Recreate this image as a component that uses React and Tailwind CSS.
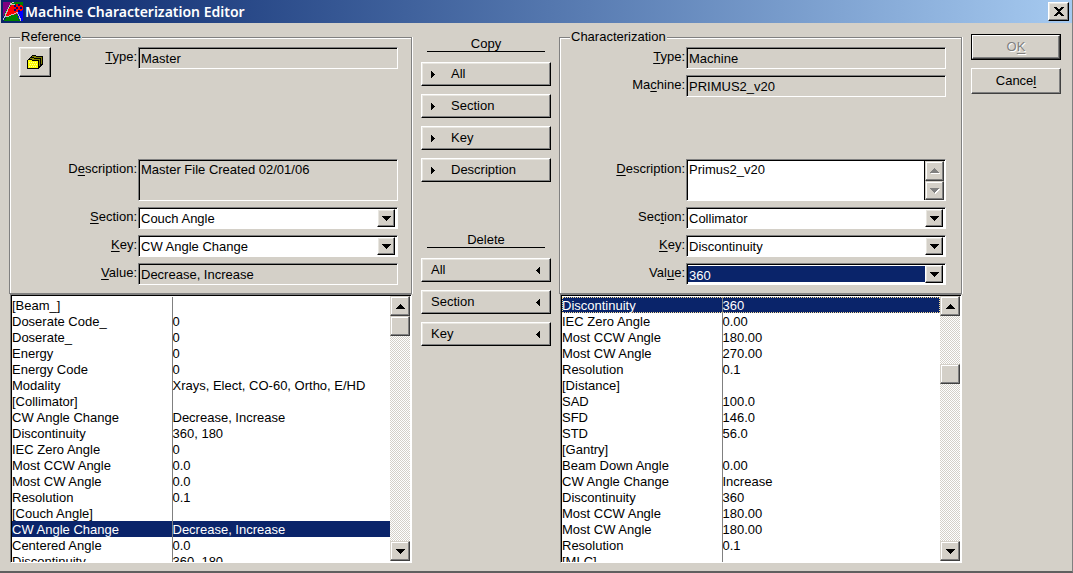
import { useState } from "react";

const referenceRows = [
  ["[Beam_]", ""],
  ["Doserate Code_", "0"],
  ["Doserate_", "0"],
  ["Energy", "0"],
  ["Energy Code", "0"],
  ["Modality", "Xrays, Elect, CO-60, Ortho, E/HD"],
  ["[Collimator]", ""],
  ["CW Angle Change", "Decrease, Increase"],
  ["Discontinuity", "360, 180"],
  ["IEC Zero Angle", "0"],
  ["Most CCW Angle", "0.0"],
  ["Most CW Angle", "0.0"],
  ["Resolution", "0.1"],
  ["[Couch Angle]", ""],
  ["CW Angle Change", "Decrease, Increase"],
  ["Centered Angle", "0.0"],
  ["Discontinuity", "360, 180"],
];

const machineRows = [
  ["Discontinuity", "360"],
  ["IEC Zero Angle", "0.00"],
  ["Most CCW Angle", "180.00"],
  ["Most CW Angle", "270.00"],
  ["Resolution", "0.1"],
  ["[Distance]", ""],
  ["SAD", "100.0"],
  ["SFD", "146.0"],
  ["STD", "56.0"],
  ["[Gantry]", ""],
  ["Beam Down Angle", "0.00"],
  ["CW Angle Change", "Increase"],
  ["Discontinuity", "360"],
  ["Most CCW Angle", "180.00"],
  ["Most CW Angle", "180.00"],
  ["Resolution", "0.1"],
  ["[MLC]", ""],
];

const raised =
  "bg-[#d4d0c8] border border-t-white border-l-white border-r-black border-b-black shadow-[inset_-1px_-1px_0_#808080,inset_1px_1px_0_#e8e6e0]";
const raisedSoft =
  "bg-[#d4d0c8] border border-t-[#d4d0c8] border-l-[#d4d0c8] border-r-[#404040] border-b-[#404040] shadow-[inset_-1px_-1px_0_#808080,inset_1px_1px_0_#fff]";
const sunken =
  "border border-t-[#808080] border-l-[#808080] border-r-white border-b-white shadow-[inset_1px_1px_0_#000]";

const AppIcon = () => (
  <svg width="20" height="19" viewBox="0 0 20 19" shapeRendering="crispEdges" aria-hidden="true">
    <rect width="20" height="19" fill="#008000" />
    <path d="M0 0h8L0 15z" fill="#800080" />
    <path d="M0 14L3 11v5l-3 3z" fill="#0a246a" />
    <path d="M13 10l7-6v15h-3z" fill="#00f" />
    <path d="M8 3h3l3 9-4 1-7 1 1-4z" fill="#f00" />
    <path d="M8 1L0 18M7 2h4l7 17M2 15l4-1 7-3 7-6M7 2l4-2" fill="none" stroke="#c0c0c0" strokeWidth="1" />
    <ellipse cx="15" cy="6" rx="5" ry="4" fill="#f00" />
    <path d="M11 3h2v2h-2zM15 2h2v2h-2zM13 5h2v2h-2zM17 5h2v2h-2zM11 7h2v2h-2zM15 8h2v2h-2z" fill="#000080" />
  </svg>
);

const FolderIcon = () => (
  <svg width="16" height="14" viewBox="0 0 16 14" shapeRendering="crispEdges" aria-hidden="true">
    <path d="M4 1h1V0h4v1h7v9h-1v1H4z" fill="#000" />
    <path d="M5 1h4v1h6v1H5z" fill="#808000" />
    <path d="M2 3h1V2h4v1h7v9h-1v1H2z" fill="#000" />
    <path d="M3 3h4v1h6v7h-1V5H3zM14 3h1v6h-1z" fill="#808000" />
    <path d="M0 5h1V4h4v1h7v9H0z" fill="#000" />
    <path d="M1 5h4v1h6v7H1z" fill="#ff0" />
    <path d="M2 7h1v1H2zM4 7h1v1H4zM6 7h1v1H6zM8 7h1v1H8zM3 9h1v1H3zM5 9h1v1H5zM7 9h1v1H7zM9 9h1v1H9zM2 11h1v1H2zM4 11h1v1H4zM6 11h1v1H6zM8 11h1v1H8z" fill="#ffffa0" />
  </svg>
);

const arrowPaths = {
  down: "M0 0h9v1H8v1H7v1H6v1H5v1H4V4H3V3H2V2H1V1H0z",
  up: "M4 0h1v1h1v1h1v1h1v1h1v1H0V4h1V3h1V2h1V1h1z",
  right: "M0 0h1v1h1v1h1v1h1v1H3v1H2v1H1v1H0z",
  left: "M4 0H3v1H2v1H1v1H0v1h1v1h1v1h1v1h1z",
};

const Arrow = ({ dir, disabled }) => {
  const vertical = dir === "up" || dir === "down";
  return (
    <svg
      className="shrink-0 overflow-visible"
      width={vertical ? 9 : 4}
      height={vertical ? 5 : 7}
      shapeRendering="crispEdges"
      aria-hidden="true"
    >
      {disabled && <path d={arrowPaths[dir]} fill="#fff" transform="translate(1 1)" />}
      <path d={arrowPaths[dir]} fill={disabled ? "#808080" : "#000"} />
    </svg>
  );
};

// Draws the "&Type" style mnemonic underline
const Mnemonic = ({ text }) => {
  const i = text.indexOf("&");
  if (i < 0) return text;
  return (
    <>
      {text.slice(0, i)}
      <span className="underline underline-offset-2">{text[i + 1]}</span>
      {text.slice(i + 2)}
    </>
  );
};

const Row = ({ id, label, labelWidth, tall, lead, children }) => (
  <div className={`flex items-start ${tall ? "h-12" : "h-7"}`}>
    <div className={`flex shrink-0 items-start justify-end ${labelWidth}`}>
      {lead}
      <label htmlFor={id} className="pr-px leading-5">
        <Mnemonic text={label} />
      </label>
    </div>
    {children}
  </div>
);

const ReadOnly = ({ id, value }) => (
  <input id={id} readOnly value={value} className={`h-[22px] min-w-0 flex-1 bg-[#d4d0c8] px-[2px] outline-none ${sunken}`} />
);

const Combo = ({ id, options, selected }) => (
  <div className={`relative flex h-[22px] min-w-0 flex-1 bg-white p-px ${sunken}`}>
    <select
      id={id}
      defaultValue={options[0]}
      className={`min-w-0 flex-1 appearance-none px-px outline-none ${
        selected ? "my-px mr-[19px] bg-[#0a246a] text-white" : "bg-transparent"
      }`}
    >
      {options.map((o) => (
        <option key={o}>{o}</option>
      ))}
    </select>
    <span className={`pointer-events-none absolute top-px right-0.5 bottom-px flex w-[18px] items-center justify-center ${raised}`}>
      <Arrow dir="down" />
    </span>
  </div>
);

const GroupBox = ({ title, className, children }) => (
  <fieldset className={`min-w-0 border border-[#808080] shadow-[inset_1px_1px_0_#fff,1px_0_0_#fff] ${className}`}>
    <legend className="ml-[10px] bg-[#d4d0c8] px-px leading-[14px]">{title}</legend>
    {children}
  </fieldset>
);

const ValueList = ({ label, rows, selected, onSelect, focused, thumb }) => (
  <div className={`ml-px flex min-h-0 flex-1 bg-white pt-px pl-px ${sunken}`}>
    <div className="min-w-0 flex-1 overflow-hidden pt-px">
      <table aria-label={label} className="w-full table-fixed border-collapse">
        <tbody>
          {rows.map(([key, value], i) => (
            <tr
              key={i}
              onClick={() => onSelect(i)}
              className={`h-4 ${i === selected ? "bg-[#0a246a] text-white" : ""} ${
                i === selected && focused ? "outline-1 -outline-offset-1 outline-dotted outline-[#f5db95]" : ""
              }`}
            >
              <td className="w-40 border-r border-[#808080] p-0 pt-px leading-[15px] whitespace-nowrap">{key}</td>
              <td className="p-0 pt-px leading-[15px] whitespace-nowrap">{value}</td>
            </tr>
          ))}
        </tbody>
      </table>
    </div>
    <div className="mr-px mb-px flex w-5 shrink-0 flex-col bg-[repeating-conic-gradient(#fff_0_25%,#d4d0c8_0_50%)] bg-[size:2px_2px]">
      <button aria-label="Scroll up" className={`flex h-5 items-center justify-center ${raisedSoft}`}>
        <Arrow dir="up" />
      </button>
      <div className="flex-1">
        <div className={`h-5 ${thumb} ${raisedSoft}`} />
      </div>
      <button aria-label="Scroll down" className={`flex h-5 items-center justify-center ${raisedSoft}`}>
        <Arrow dir="down" />
      </button>
    </div>
  </div>
);

const ActionHeading = ({ children }) => (
  <h2 className="mx-auto w-[118px] border-b border-black text-center leading-[14px]">{children}</h2>
);

const CopyButton = ({ children }) => (
  <button className={`flex h-6 items-center gap-4 pl-[9px] ${raised}`}>
    <Arrow dir="right" />
    {children}
  </button>
);

const DeleteButton = ({ children }) => (
  <button className={`flex h-6 items-center justify-between pr-[10px] pl-[9px] ${raised}`}>
    {children}
    <Arrow dir="left" />
  </button>
);

const App = () => {
  const [refRow, setRefRow] = useState(14);
  const [machineRow, setMachineRow] = useState(0);

  return (
    <div className="flex h-screen flex-col border-r border-b-2 border-[#808080] border-b-[#606060] bg-[#d4d0c8] font-['Liberation_Sans',Arial,sans-serif] text-[13px] text-black">
      <header className="ml-px flex h-[23px] shrink-0 items-center bg-linear-to-r from-[#0a246a] to-[#a6caf0] pr-[3px] pl-[2px]">
        <AppIcon />
        <h1 className="ml-[2px] flex-1 font-['Noto_Sans','Open_Sans',sans-serif] text-[14px] leading-5 font-semibold text-white">
          Machine Characterization Editor
        </h1>
        <button aria-label="Close" className={`flex h-[19px] w-[21px] items-center justify-center ${raised}`}>
          <svg width="10" height="9" shapeRendering="crispEdges" aria-hidden="true">
            <path d="M0 0h3v1h1v1h2V1h1V0h3v1H9v1H8v1H7v1H6v1h1v1h1v1h1v1h1v1H7V8H6V7H4v1H3v1H0V8h1V7h1V6h1V5h1V4H3V3H2V2H1V1H0z" />
          </svg>
        </button>
      </header>

      <main className="flex min-h-0 flex-1 pr-[11px] pb-2 pl-[9px]">
        <section className="flex min-w-0 flex-1 flex-col pt-[7px]">
          <GroupBox title="Reference" className="pr-[13px] pb-[2px]">
            <div className="pt-[3px]">
              <Row
                id="ref-type"
                label="&Type:"
                labelWidth="w-32"
                lead={
                  <button aria-label="Open reference" className={`mr-auto ml-[9px] flex h-[30px] w-8 items-center justify-center ${raised}`}>
                    <FolderIcon />
                  </button>
                }
              >
                <ReadOnly id="ref-type" value="Master" />
              </Row>
              <div className="h-21" />
              <Row id="ref-desc" label="D&escription:" labelWidth="w-32" tall>
                <textarea
                  id="ref-desc"
                  readOnly
                  value="Master File Created 02/01/06"
                  className={`h-[42px] min-w-0 flex-1 resize-none overflow-hidden bg-[#d4d0c8] px-[2px] pt-[2px] leading-4 outline-none ${sunken}`}
                />
              </Row>
              <Row id="ref-section" label="&Section:" labelWidth="w-32">
                <Combo id="ref-section" options={["Couch Angle", "Beam_", "Collimator"]} />
              </Row>
              <Row id="ref-key" label="&Key:" labelWidth="w-32">
                <Combo id="ref-key" options={["CW Angle Change", "Centered Angle", "Discontinuity"]} />
              </Row>
              <Row id="ref-value" label="&Value:" labelWidth="w-32">
                <ReadOnly id="ref-value" value="Decrease, Increase" />
              </Row>
            </div>
          </GroupBox>
          <ValueList label="Reference values" rows={referenceRows} selected={refRow} onSelect={setRefRow} thumb="mt-0" />
        </section>

        <section className="mr-2 ml-[9px] flex w-[130px] shrink-0 flex-col pt-[14px]">
          <ActionHeading>Copy</ActionHeading>
          <div className="mt-[10px] flex flex-col gap-2">
            <CopyButton>All</CopyButton>
            <CopyButton>Section</CopyButton>
            <CopyButton>Key</CopyButton>
            <CopyButton>Description</CopyButton>
          </div>
          <div className="mt-[51px]">
            <ActionHeading>Delete</ActionHeading>
          </div>
          <div className="mt-[10px] flex flex-col gap-2">
            <DeleteButton>All</DeleteButton>
            <DeleteButton>Section</DeleteButton>
            <DeleteButton>Key</DeleteButton>
          </div>
        </section>

        <section className="flex min-w-0 flex-1 flex-col pt-[7px]">
          <GroupBox title="Characterization" className="pr-[15px] pb-[2px]">
            <div className="pt-[3px]">
              <Row id="mach-type" label="&Type:" labelWidth="w-[126px]">
                <ReadOnly id="mach-type" value="Machine" />
              </Row>
              <Row id="mach-name" label="Ma&chine:" labelWidth="w-[126px]">
                <ReadOnly id="mach-name" value="PRIMUS2_v20" />
              </Row>
              <div className="h-14" />
              <Row id="mach-desc" label="&Description:" labelWidth="w-[126px]" tall>
                <div className={`flex h-[42px] min-w-0 flex-1 bg-white pt-px pl-px ${sunken}`}>
                  <textarea
                    id="mach-desc"
                    defaultValue="Primus2_v20"
                    className="min-w-0 flex-1 resize-none overflow-hidden px-px pt-px leading-4 outline-none"
                  />
                  <div className="mr-px flex w-5 flex-col border-l border-black">
                    <button disabled aria-label="Scroll description up" className={`flex flex-1 items-center justify-center ${raisedSoft}`}>
                      <Arrow dir="up" disabled />
                    </button>
                    <button disabled aria-label="Scroll description down" className={`flex flex-1 items-center justify-center ${raisedSoft}`}>
                      <Arrow dir="down" disabled />
                    </button>
                  </div>
                </div>
              </Row>
              <Row id="mach-section" label="Sec&tion:" labelWidth="w-[126px]">
                <Combo id="mach-section" options={["Collimator", "Distance", "Gantry", "MLC"]} />
              </Row>
              <Row id="mach-key" label="&Key:" labelWidth="w-[126px]">
                <Combo id="mach-key" options={["Discontinuity", "IEC Zero Angle", "Resolution"]} />
              </Row>
              <Row id="mach-value" label="Val&ue:" labelWidth="w-[126px]">
                <Combo id="mach-value" options={["360", "180"]} selected />
              </Row>
            </div>
          </GroupBox>
          <ValueList
            label="Characterization values"
            rows={machineRows}
            selected={machineRow}
            onSelect={setMachineRow}
            focused
            thumb="mt-12"
          />
        </section>

        <section className="ml-[9px] flex w-[90px] shrink-0 flex-col gap-2 pt-[11px]">
          <div className="flex flex-col border border-black">
            <button
              disabled
              className="h-6 border border-t-white border-l-white border-r-[#404040] border-b-[#404040] text-[#808080] shadow-[inset_-1px_-1px_0_#808080] [text-shadow:1px_1px_0_#fff]"
            >
              <Mnemonic text="O&K" />
            </button>
          </div>
          <button className="h-[26px] border border-t-white border-l-white border-r-[#404040] border-b-[#404040] shadow-[inset_-1px_-1px_0_#808080]">
            <Mnemonic text="Cance&l" />
          </button>
        </section>
      </main>
    </div>
  );
};

export default App;
